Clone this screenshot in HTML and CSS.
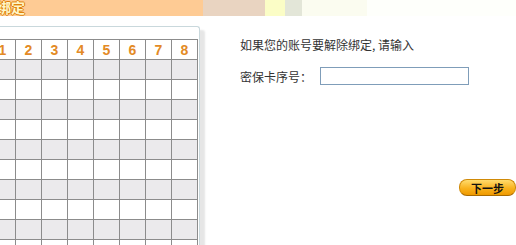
FILE: index.html
```html
<!doctype html>
<html lang="zh-CN">
  <head>
    <meta charset="UTF-8" />
    <meta name="viewport" content="width=device-width, initial-scale=1.0" />
    <link rel="stylesheet" href="styles.css">
    <title>解除绑定</title>
  </head>
  <body>
    <div class="top-bar">
      <span class="top-title">绑定</span>
    </div>

    <div class="main">
      <div class="card-panel">
        <table class="card-grid">
          <thead>
            <tr>
              <th>1</th><th>2</th><th>3</th><th>4</th><th>5</th><th>6</th><th>7</th><th>8</th>
            </tr>
          </thead>
          <tbody id="grid-body"></tbody>
        </table>
      </div>

      <form class="unbind">
        <p class="hint">如果您的账号要解除绑定, 请输入</p>
        <label class="field" for="card-no">
          <span>密保卡序号：</span>
          <input type="text" id="card-no" name="card-no" />
        </label>
        <button type="button" class="next-btn">下一步</button>
      </form>
    </div>

    <script>
      // fill the empty rows of the card grid
      const body = document.getElementById('grid-body');
      for (let r = 0; r < 10; r++)
      {
        const tr = document.createElement('tr');
        for (let c = 0; c < 8; c++) tr.appendChild(document.createElement('td'));
        body.appendChild(tr);
      }
    </script>
  </body>
</html>
```

FILE: styles.css
```css
html,
body {
  margin: 0;
  height: 100%;
  overflow: hidden;
  background: #fff;
  font-family: "Noto Sans CJK SC", "Liberation Sans", sans-serif;
  font-size: 12px;
  color: #333;
}

/* header strip */
.top-bar {
  height: 16px;
  background: linear-gradient(to right,
    #fecb94 0, #fecb94 203px,
    #e9d4c1 203px, #e9d4c1 265px,
    #fbfdc6 265px, #fbfdc6 285px,
    #e3e6d8 285px, #e3e6d8 302px,
    #fbfcf0 302px, #fbfcf0 367px,
    #fefffb 367px);
  overflow: hidden;
}

.top-title {
  display: block;
  margin-left: -3px;
  font-size: 14px;
  font-weight: bold;
  line-height: 15px;
  color: #fff6c8;
  text-shadow:
    1px 0 0 #e0820c, -1px 0 0 #e0820c,
    0 1px 0 #e0820c, 0 -1px 0 #e0820c;
}

.main {
  display: flex;
  align-items: flex-start;
  height: 229px;
  overflow: hidden;
}

/* left: security card grid */
.card-panel {
  margin: 10px 0 0 -13px;
  padding: 12px 1px 0 1px;
  border: 1px solid #c9d8dc;
  border-bottom: none;
  border-radius: 3px 3px 0 0;
  background: #fff;
  box-shadow: 5px 4px 2px #e6e6e6;
}

.card-grid {
  border-collapse: collapse;
}

.card-grid th,
.card-grid td {
  width: 25px;
  height: 19px;
  padding: 0;
  border: 1px solid #8c8c8c;
  box-sizing: content-box;
}

.card-grid th {
  background: #fff;
  font-family: "Liberation Sans", sans-serif;
  font-size: 14px;
  font-weight: bold;
  color: #e38a25;
  text-align: center;
}

.card-grid tbody tr:nth-child(odd) td {
  background: #ebeaec;
}

/* right: unbind form */
.unbind {
  flex: 1;
  display: flex;
  flex-direction: column;
  margin: 0 0 0 40px;
  padding-top: 21px;
}

.hint {
  margin: 0;
  line-height: 16px;
}

.field {
  display: flex;
  align-items: center;
  margin-top: 14px;
}

.field input {
  width: 149px;
  height: 18px;
  margin: 0 0 0 8px;
  padding: 0;
  border: 1px solid #7f9db9;
  box-sizing: border-box;
  background: #fff;
}

.next-btn {
  align-self: flex-end;
  width: 57px;
  height: 17px;
  margin-top: 94px;
  padding: 0;
  border: 1px solid #d08a08;
  border-bottom-color: #a86a00;
  border-radius: 8px;
  background: linear-gradient(#ffdc6e, #f9b21e 55%, #ef9a00);
  font-family: "Noto Sans CJK SC", sans-serif;
  font-size: 11px;
  font-weight: bold;
  line-height: 14px;
  color: #111;
}
```
